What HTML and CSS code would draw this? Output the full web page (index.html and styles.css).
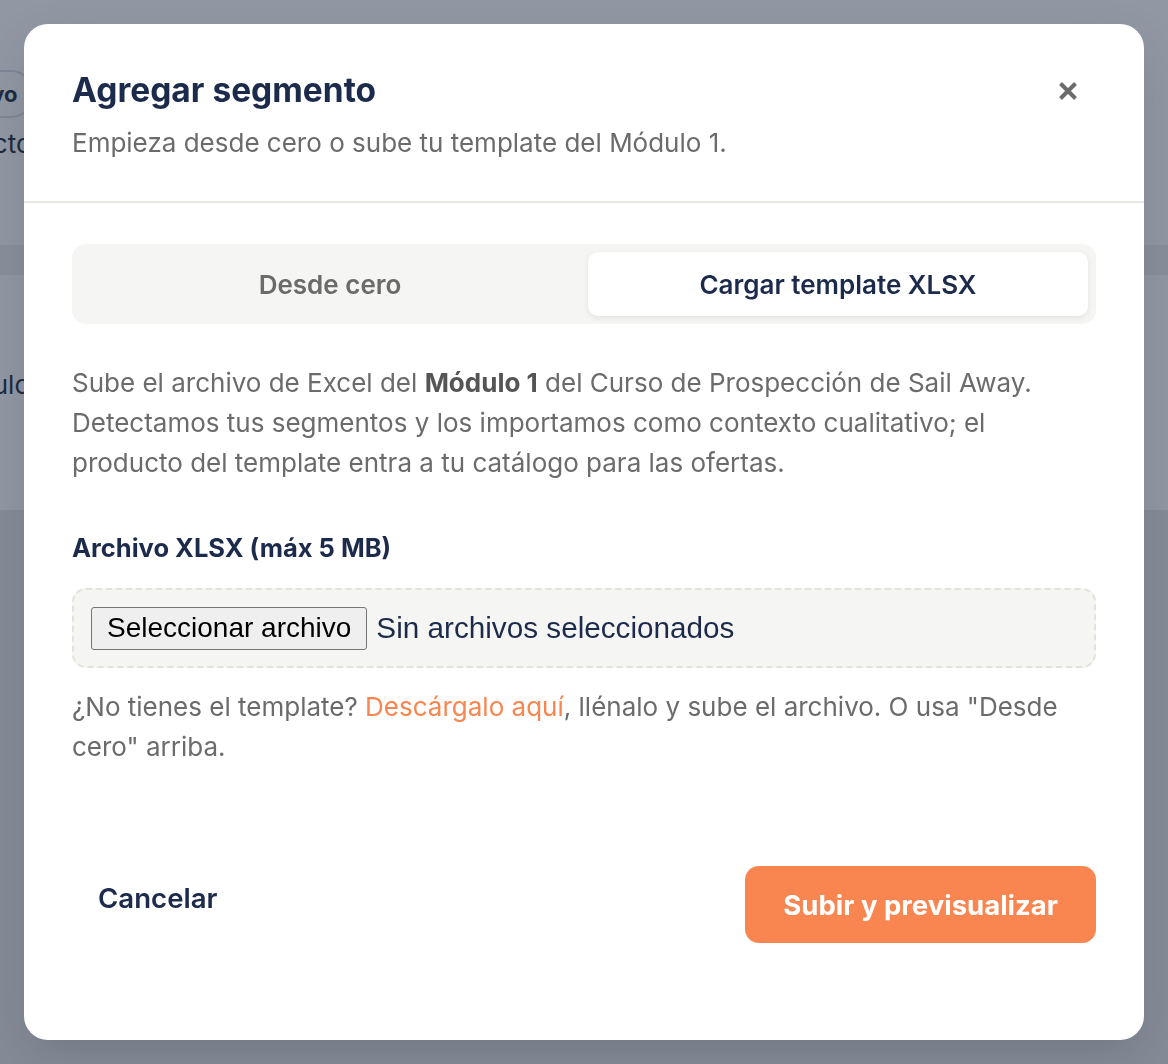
FILE: index.html
```html
<!DOCTYPE html>
<html lang="es">
<head>
    <meta charset="UTF-8">
    <meta name="viewport" content="width=device-width, initial-scale=1.0">
    <title>Segmentos</title>
    <link rel="stylesheet" href="styles.css">
</head>
<body>
    <div class="page">
        <div class="page-top">
            <span class="chip">Nuevo</span>
        </div>
        <div class="page-sub">Producto</div>
        <div class="page-band"></div>
        <div class="page-row">Cálculo</div>
        <div class="page-lower"></div>
    </div>

    <div class="overlay">
        <div class="modal">
            <div class="modal-header">
                <div>
                    <h2 class="modal-title">Agregar segmento</h2>
                    <p class="modal-subtitle">Empieza desde cero o sube tu template del Módulo 1.</p>
                </div>
                <button class="close-btn" aria-label="Cerrar">
                    <svg width="22" height="22" viewBox="0 0 22 22">
                        <path d="M3.5 3.5 L18.5 18.5 M18.5 3.5 L3.5 18.5" stroke="#6b6b6b" stroke-width="4" stroke-linecap="butt"/>
                    </svg>
                </button>
            </div>

            <div class="modal-body">
                <div class="tabs">
                    <button class="tab">Desde cero</button>
                    <button class="tab active">Cargar template XLSX</button>
                </div>

                <p class="intro">
                    Sube el archivo de Excel del <strong>Módulo 1</strong> del Curso de Prospección de Sail Away.
                    Detectamos tus segmentos y los importamos como contexto cualitativo; el
                    producto del template entra a tu catálogo para las ofertas.
                </p>

                <label class="field-label">Archivo XLSX (máx 5 MB)</label>
                <div class="dropzone">
                    <button class="file-btn">Seleccionar archivo</button>
                    <span class="file-name">Sin archivos seleccionados</span>
                </div>

                <p class="hint">
                    ¿No tienes el template? <a href="#">Descárgalo aquí</a>, llénalo y sube el archivo. O usa "Desde cero" arriba.
                </p>
            </div>

            <div class="modal-footer">
                <button class="btn-cancel">Cancelar</button>
                <button class="btn-primary">Subir y previsualizar</button>
            </div>
        </div>
    </div>
</body>
</html>
```

FILE: styles.css
```css
* {
    box-sizing: border-box;
}

body {
    margin: 0;
    font-family: Inter, "Noto Sans", sans-serif;
    height: 100vh;
    overflow: hidden;
    background-color: #f8f8f6;
}

/* page behind the dialog */
.page {
    height: 100%;
    display: flex;
    flex-direction: column;
    color: #2a3142;
}

.page-top {
    height: 120px;
    padding: 70px 0 0 0;
}

.chip {
    display: inline-block;
    margin-left: -68px;
    padding: 9px 14px;
    border: 2px solid #d6d8dc;
    border-radius: 22px;
    font-size: 22px;
    font-weight: 700;
}

.page-sub {
    margin-left: -80px;
    padding-top: 8px;
    font-size: 26px;
    height: 125px;
}

.page-band {
    height: 30px;
    background-color: #e8e8e6;
}

.page-row {
    margin-left: -62px;
    padding-top: 94px;
    font-size: 26px;
    height: 235px;
}

.page-lower {
    flex: 1;
    background-color: #e2e2e0;
}

.overlay {
    position: fixed;
    inset: 0;
    background-color: rgba(21, 35, 64, 0.45);
    display: flex;
    padding: 24px;
}

.modal {
    flex: 1;
    background-color: white;
    border-radius: 24px;
    display: flex;
    flex-direction: column;
    box-shadow: 0 20px 50px rgba(0, 0, 0, 0.12);
}

.modal-header {
    display: flex;
    justify-content: space-between;
    align-items: flex-start;
    padding: 46px 48px 42px 48px;
    border-bottom: 2px solid #e8e8e3;
}

.modal-title {
    margin: 0;
    font-size: 33.5px;
    font-weight: 700;
    color: #1c2b4b;
    line-height: 40px;
}

.modal-subtitle {
    margin: 17px 0 0 0;
    font-size: 26px;
    color: #6b6b6b;
    line-height: 32px;
}

.close-btn {
    border: none;
    background: none;
    padding: 0;
    margin-top: 10px;
    margin-right: 17px;
    cursor: pointer;
}

.modal-body {
    padding: 41px 48px 0 48px;
}

.tabs {
    display: flex;
    gap: 8px;
    padding: 8px;
    background-color: #f5f5f3;
    border-radius: 14px;
}

.tab {
    flex: 1;
    height: 64px;
    border: none;
    background: none;
    border-radius: 10px;
    font-family: inherit;
    font-size: 26px;
    font-weight: 600;
    color: #6b6b6b;
    cursor: pointer;
}

.tab.active {
    background-color: white;
    color: #1c2b4b;
    box-shadow: 0 2px 6px rgba(0, 0, 0, 0.08);
}

.intro {
    margin: 39px 0 0 0;
    font-size: 26px;
    line-height: 40px;
    color: #6b6b6b;
}

.intro strong {
    color: #555;
}

.field-label {
    display: block;
    margin-top: 49px;
    font-size: 25.5px;
    line-height: 32px;
    font-weight: 700;
    color: #1c2b4b;
}

.dropzone {
    display: flex;
    align-items: center;
    gap: 9px;
    height: 80px;
    margin-top: 24px;
    padding: 0 17px;
    background-color: #f5f5f3;
    border: 2px dashed #e3e3de;
    border-radius: 14px;
}

.file-btn {
    font-family: "Liberation Sans", Arial, sans-serif;
    font-size: 28px;
    color: black;
    height: 43px;
    padding: 0 15px;
    background-color: #efefef;
    border: 1px solid #767676;
    border-radius: 3px;
}

.file-name {
    font-family: "Liberation Sans", Arial, sans-serif;
    font-size: 29.7px;
    color: #1c2b4b;
}

.hint {
    margin: 19px 0 0 0;
    font-size: 26px;
    line-height: 40px;
    color: #6b6b6b;
}

.hint a {
    color: #f98650;
    text-decoration: none;
}

.modal-footer {
    margin-top: auto;
    display: flex;
    justify-content: space-between;
    align-items: flex-start;
    padding: 0 48px 97px 48px;
}

.btn-cancel {
    height: 64px;
    padding: 0 26px;
    border: none;
    background: none;
    font-family: inherit;
    font-size: 27.6px;
    font-weight: 600;
    color: #1c2b4b;
    cursor: pointer;
}

.btn-primary {
    height: 77px;
    padding: 0 38px;
    border: none;
    border-radius: 14px;
    background-color: #f98650;
    font-family: inherit;
    font-size: 27.5px;
    font-weight: 700;
    color: white;
    cursor: pointer;
}
```
